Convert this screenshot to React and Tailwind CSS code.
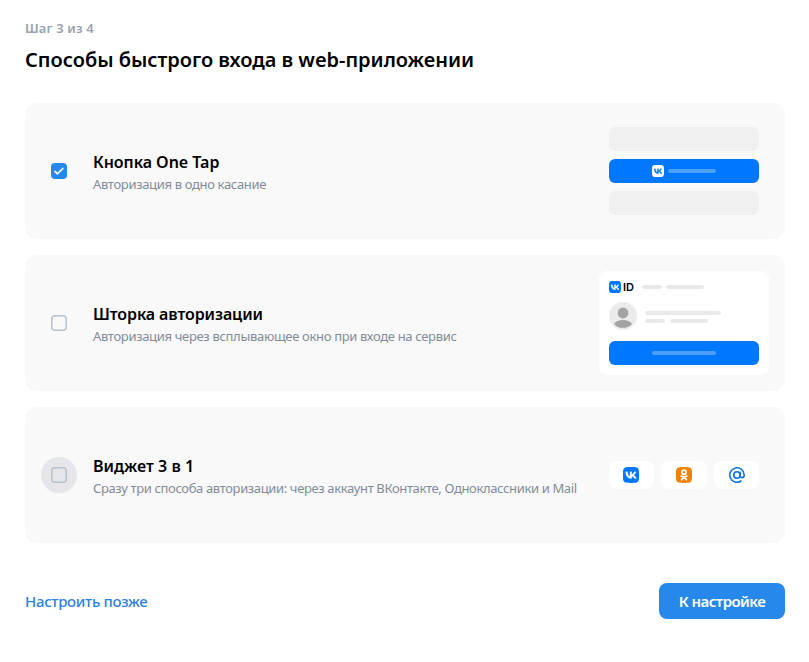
import React, { useState } from "react";
import clsx from "clsx";

const SQUIRCLE =
  "M1.69 1.69C0 3.37 0 6.09 0 11.52v.96c0 5.43 0 8.15 1.69 9.83C3.37 24 6.09 24 11.52 24h.96c5.43 0 8.15 0 9.83-1.69C24 20.63 24 17.91 24 12.48v-.96c0-5.43 0-8.15-1.69-9.83C20.63 0 17.91 0 12.48 0h-.96C6.09 0 3.37 0 1.69 1.69z";

// ================= ICONS =================
const VkLogo = ({ size, bg = "#0077ff", fg = "#ffffff" }) => (
  <svg width={size} height={size} viewBox="0 0 24 24" className="shrink-0">
    <path d={SQUIRCLE} fill={bg} />
    <path
      d="M12.77 17.29c-5.47 0-8.59-3.75-8.72-9.99h2.74c.09 4.58 2.11 6.52 3.71 6.92V7.3h2.58v3.95c1.58-.17 3.24-1.97 3.8-3.95h2.58c-.43 2.44-2.23 4.24-3.51 4.98 1.28.6 3.33 2.17 4.11 5.01h-2.84c-.61-1.9-2.13-3.37-4.14-3.57v3.57h-.31z"
      fill={fg}
      stroke={fg}
      strokeWidth="0.5"
    />
  </svg>
);

const OkLogo = () => (
  <svg width="16" height="16" viewBox="0 0 24 24">
    <path d={SQUIRCLE} fill="#ee8208" />
    <g fill="none" stroke="#ffffff" strokeWidth="2.5" strokeLinecap="round">
      <circle cx="12" cy="7.7" r="3.1" />
      <path d="M7.8 13.4c2.6 1.6 5.8 1.6 8.4 0M12 15l-3.7 4M12 15l3.7 4" />
    </g>
  </svg>
);

const MailLogo = () => (
  <svg width="16" height="16" viewBox="0 0 24 24">
    <g fill="none" stroke="#0a75f2" strokeWidth="2.4" strokeLinecap="round">
      <circle cx="12" cy="12" r="4.8" />
      <path d="M16.8 7.9v5.3c0 3.9 6 3.9 6-1.2A10.8 10.8 0 1 0 18 21" />
    </g>
  </svg>
);

const Avatar = () => (
  <svg width="28" height="28" viewBox="0 0 28 28" className="shrink-0">
    <circle cx="14" cy="14" r="14" fill="#ebebeb" />
    <circle cx="14" cy="11" r="5.4" fill="#a3a3a3" />
    <path d="M5 22c1.6-2.6 5-4 9-4s7.4 1.4 9 4a12.4 12.4 0 0 1-18 0z" fill="#a3a3a3" />
  </svg>
);

// ================= PREVIEWS =================
const OneTapPreview = () => (
  <div className="flex w-[150px] flex-col gap-2">
    <div className="h-6 rounded-md bg-[#f0f0f0]" />
    <div className="flex h-6 items-center gap-1 rounded-md bg-[#0077ff] pl-[43px]">
      <VkLogo size={12} bg="#ffffff" fg="#0077ff" />
      <div className="h-1 w-12 rounded-full bg-[#4da0ff]" />
    </div>
    <div className="h-6 rounded-md bg-[#f0f0f0]" />
  </div>
);

const SheetPreview = () => (
  <div className="-mr-2.5 flex h-[104px] w-[170px] flex-col rounded-lg bg-white p-2.5">
    <div className="flex h-3 items-center">
      <VkLogo size={12} />
      <span className="ml-[2px] w-[11px] font-['Inter',sans-serif] text-[11px] leading-3 font-semibold text-black">ID</span>
      <div className="ml-2 h-1 w-5 rounded-full bg-[#e9e9e9]" />
      <div className="ml-1 h-1 w-[38px] rounded-full bg-[#e9e9e9]" />
    </div>
    <div className="mt-[9px] flex items-center gap-2">
      <Avatar />
      <div className="flex flex-col gap-1 pt-[2px]">
        <div className="h-1 w-[76px] rounded-full bg-[#e9e9e9]" />
        <div className="flex gap-[5px]">
          <div className="h-1 w-5 rounded-full bg-[#e9e9e9]" />
          <div className="h-1 w-[38px] rounded-full bg-[#e9e9e9]" />
        </div>
      </div>
    </div>
    <div className="mt-auto flex h-6 items-center justify-center rounded-md bg-[#0077ff]">
      <div className="h-1 w-16 rounded-full bg-[#4da0ff]" />
    </div>
  </div>
);

const WidgetPreview = () => (
  <div className="flex w-[150px] justify-between">
    <div className="flex h-7 w-[45px] items-center justify-center rounded-lg bg-white pr-px">
      <VkLogo size={16} />
    </div>
    <div className="flex h-7 w-[46px] items-center justify-center rounded-lg bg-white">
      <OkLogo />
    </div>
    <div className="flex h-7 w-[45px] items-center justify-center rounded-lg bg-white">
      <MailLogo />
    </div>
  </div>
);

const methods = [
  {
    id: "onetap",
    title: "Кнопка One Tap",
    text: "Авторизация в одно касание",
    titleClass: "tracking-[-0.03px]",
    textClass: "tracking-[-0.33px]",
    preview: OneTapPreview,
  },
  {
    id: "sheet",
    title: "Шторка авторизации",
    text: "Авторизация через всплывающее окно при входе на сервис",
    titleClass: "tracking-[-0.1px]",
    textClass: "tracking-[-0.32px]",
    preview: SheetPreview,
  },
  {
    id: "widget",
    title: "Виджет 3 в 1",
    text: "Сразу три способа авторизации: через аккаунт ВКонтакте, Одноклассники и Mail",
    titleClass: "tracking-[0.02px]",
    textClass: "tracking-[-0.36px]",
    preview: WidgetPreview,
  },
];

const Checkbox = ({ checked, focused }) => (
  <span
    className={clsx(
      "flex h-9 w-9 shrink-0 items-center justify-center rounded-full",
      focused && "bg-[#e4e6e9]"
    )}
  >
    {checked ? (
      <span className="flex h-4 w-4 items-center justify-center rounded-[4px] bg-[#2688eb]">
        <svg width="16" height="16" viewBox="0 0 16 16" fill="none">
          <path d="M3.9 8.3l2.6 2.5 5.4-5.4" stroke="#ffffff" strokeWidth="1.6" strokeLinecap="round" strokeLinejoin="round" />
        </svg>
      </span>
    ) : (
      <svg width="16" height="16" viewBox="0 0 16 16" fill="none">
        <rect x="0.75" y="0.75" width="14.5" height="14.5" rx="3.25" stroke="#b8c1cc" strokeWidth="1.5" />
      </svg>
    )}
  </span>
);

const App = () => {
  const [selected, setSelected] = useState(["onetap"]);

  const toggle = (id) => {
    setSelected((prev) => (prev.includes(id) ? prev.filter((x) => x !== id) : [...prev, id]));
  };

  return (
    <div className="h-[662px] w-full bg-white px-[25px] pt-5 pr-6 font-['Noto_Sans',sans-serif] text-black">
      {/* HEADER */}
      <p className="text-[13px] leading-4 font-semibold tracking-[0.15px] text-[#99a2ad]">Шаг 3 из 4</p>
      <h1 className="mt-3 text-[20px] leading-6 font-semibold tracking-[-0.02px] whitespace-nowrap">
        Способы быстрого входа в web-приложении
      </h1>

      {/* METHODS */}
      <div className="mt-[31px] flex flex-col gap-4">
        {methods.map((m) => (
          <div
            key={m.id}
            onClick={() => toggle(m.id)}
            className="flex h-[136px] cursor-pointer items-center rounded-xl bg-[#f9f9f9] pr-[26px] pl-4"
          >
            <Checkbox checked={selected.includes(m.id)} focused={m.id === "widget"} />
            <div className="ml-4 min-w-0 flex-1 pt-[2px] whitespace-nowrap">
              <h2 className={clsx("text-[16px] leading-5 font-semibold", m.titleClass)}>{m.title}</h2>
              <p className={clsx("mt-1 text-[13px] leading-4 text-[#818c99]", m.textClass)}>{m.text}</p>
            </div>
            <m.preview />
          </div>
        ))}
      </div>

      {/* FOOTER */}
      <div className="mt-10 flex items-center justify-between">
        <button className="cursor-pointer text-[15px] leading-5 font-medium tracking-[-0.32px] text-[#2d81e0]">Настроить позже</button>
        <button className="h-9 w-[126px] cursor-pointer rounded-lg bg-[#2688eb] text-[15px] leading-5 font-semibold tracking-[-0.55px] text-white">
          К настройке
        </button>
      </div>
    </div>
  );
};

export default App;
